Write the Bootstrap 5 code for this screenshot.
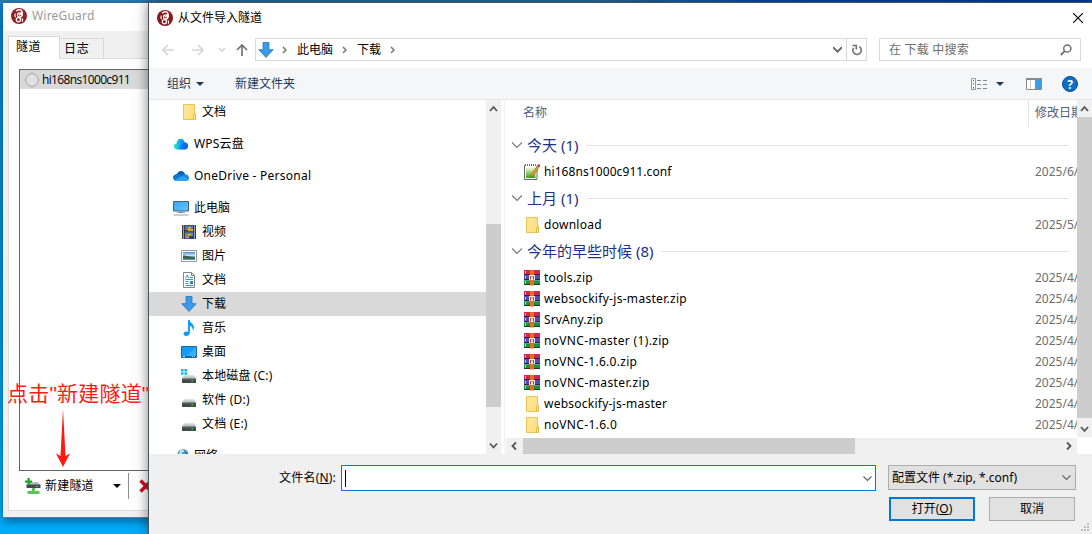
<!DOCTYPE html>
<html lang="zh-CN">
<head>
<meta charset="UTF-8">
<meta name="viewport" content="width=device-width, initial-scale=1.0">
<title>WireGuard</title>
<!-- Bootstrap CSS -->
<link href="https://cdn.jsdelivr.net/npm/bootstrap@5.3.3/dist/css/bootstrap.min.css" rel="stylesheet">
<style>
  body {
    height: 534px;
    font-family: "Noto Sans", "Noto Sans CJK SC", sans-serif;
    font-size: 12px;
    line-height: 16px;
    color: #000;
    background: linear-gradient(180deg, #0c84d2 0%, #078fdc 45%, #00adfb 97%);
  }
  svg { display: block; flex: none; }
  .topstrip { height: 3px; background: linear-gradient(90deg, #2b7cb0 0 55%, #0a50b4 70%, #0341a8); }

  /* main window */
  .win-main { left: 3px; top: 3px; width: 660px; height: 515px; background: #f0f0f0; border: solid #5b7f99; border-width: 0 0 1px 0; box-shadow: 0 3px 9px rgba(0,20,50,.5); }
  .win-main .caption { height: 28px; padding: 0 0 2px 8px; gap: 5px; background: #fff; color: #999; }
  .win-main .wg-name { font-size: 12px; letter-spacing: .2px; }
  .wg-tabs { height: 28px; padding: 5px 0 0 5px; }
  .wg-tab { border: 1px solid #d9d9d9; border-bottom: 0; line-height: 19px; }
  .wg-tab.on { width: 52px; height: 23px; padding-left: 7px; background: #fff; letter-spacing: .5px; }
  .wg-tab.off { width: 44px; height: 21px; padding-left: 4px; border-left: 0; letter-spacing: .8px; }
  .wg-pane { height: 453px; margin-left: 5px; padding: 10px 0 0 10px; background: #fff; border: 1px solid #dcdcdc; margin-top: -1px; }
  .wg-list { height: 402px; border: 1px solid #646464; }
  .wg-row { height: 19px; gap: 3px; padding-left: 5px; background: #d9d9d9; font-family: "Open Sans", sans-serif; letter-spacing: -.65px; }
  .wg-tools { height: 29px; padding-left: 6px; }
  .wg-new { width: 68px; letter-spacing: .2px; }
  .wg-drop { margin-right: 7px; }
  .wg-sep { width: 1px; height: 26px; margin-right: 10px; background: #8d8d8d; }

  /* file dialog */
  .dlg { left: 148px; top: 2px; width: 944px; height: 532px; background: #fff; border: solid #4a545c; border-width: 1px 0 0 1px; box-shadow: 0 0 12px rgba(0,0,0,.5); }
  .dlg-title { height: 29px; padding: 0 9px 0 8px; gap: 5px; }
  .dlg-nav { height: 36px; padding: 6px 11px 7px 12px; }
  .addr { width: 612px; height: 23px; border: 1px solid #d9d9d9; padding-left: 2px; }
  .crumb { padding: 0 9px 0 10px; }
  .refresh { width: 20px; height: 21px; border-left: 1px solid #d9d9d9; }
  .search { width: 202px; height: 23px; border: 1px solid #d9d9d9; padding: 0 8px 0 9px; color: #6d6d6d; }
  .search span { letter-spacing: .2px; }
  .cmdbar { height: 32px; background: #f5f6f7; border-bottom: 1px solid #e5e7ea; color: #1e395b; padding: 0 14px 0 18px; }
  .cmd-org { width: 68px; gap: 5px; }
  .cmd-view { margin: 0 22px 0 9px; }
  .browse { height: 354px; }
  .tree { width: 337px; overflow: hidden; }
  .tree-row { height: 24px; }
  .tree-row.sel { background: #d9d9d9; }
  .tree-row span { padding-left: 5px; white-space: nowrap; }
  .sb { background: #f0f0f0; }
  .sb-v { width: 15px; }
  .thumb { background: #cdcdcd; }
  .split { width: 4px; border-right: 1px solid #f0f0f0; }
  .file-pane { padding-left: 1px; }
  .files { width: 571px; height: 338px; overflow: hidden; }
  .files-head { height: 27px; margin-bottom: 2px; padding: 5px 0 0 17px; color: #4c607a; }
  .files-head .c-date { height: 27px; margin-top: -5px; border-left: 1px solid #e5e5e5; padding: 5px 0 0 6px; width: 49px; }
  .grp { height: 32px; padding: 0 8px 1px 6px; color: #1e3287; font-size: 15px; line-height: 20px; gap: 5px; }
  .grp hr { height: 1px; border: 0; background: #e2e2e2; opacity: 1; margin: 2px 0 0 3px; }
  .f-row { height: 21px; padding-left: 18px; }
  .f-row .c-date { width: 42px; color: #6d6d6d; overflow: hidden; white-space: nowrap; }
  .sb-h { height: 16px; width: 571px; background: #f0f0f0; }
  .dlg-foot { height: 80px; background: #f0f0f0; padding: 11px 16px 0 0; }
  .name-label { padding: 5px 5px 0 0; letter-spacing: .2px; }
  .name-box { width: 535px; height: 26px; border: 1px solid #0078d7; background: #fff; padding: 0 3px; }
  .caret { width: 1px; height: 17px; background: #000; }
  .type-box { width: 188px; height: 25px; border: 1px solid #adadad; background: #e1e1e1; padding: 0 4px 0 3px; margin-left: 12px; }
  .foot-btns { gap: 14px; padding: 6px 1px 0 0; }
  .w-btn { width: 86px; height: 24px; border: 1px solid #adadad; border-radius: 0; background: #e1e1e1; color: #000; font-size: 12px; line-height: 20px; padding: 0; }
  .w-btn.def { border: 2px solid #0078d7; line-height: 18px; }
  .grip { right: 2px; bottom: 2px; }

  /* red annotation */
  .note { left: 7px; top: 381px; color: #ff1a10; font-family: "Liberation Sans", "Noto Sans CJK SC", sans-serif; font-size: 21px; line-height: 26px; letter-spacing: .2px; white-space: nowrap; z-index: 5; }
  .note-arrow { left: 56px; top: 409px; z-index: 5; }
</style>
</head>
<body class="position-relative overflow-hidden">

  <!-- Icons -->
  <svg width="0" height="0" class="position-absolute">
    <defs>
      <linearGradient id="gBlue" x1="0" y1="0" x2="1" y2="1"><stop offset="0" stop-color="#35a5f0"/><stop offset="1" stop-color="#66c4fb"/></linearGradient>
      <linearGradient id="gFold" x1="0" y1="0" x2="1" y2="1"><stop offset="0" stop-color="#ffe9a0"/><stop offset="1" stop-color="#ffdc7a"/></linearGradient>
      <linearGradient id="gWps" x1="0" y1="0" x2="1" y2="0"><stop offset="0" stop-color="#37e5c5"/><stop offset=".45" stop-color="#15a9f3"/><stop offset="1" stop-color="#1059ea"/></linearGradient>
      <linearGradient id="gDrive" x1="0" y1="0" x2="0" y2="1"><stop offset="0" stop-color="#e2e4e5"/><stop offset="1" stop-color="#a9adb0"/></linearGradient>
      <linearGradient id="gGreen" x1="0" y1="0" x2="0" y2="1"><stop offset="0" stop-color="#e9f6cf"/><stop offset="1" stop-color="#35a414"/></linearGradient>
      <linearGradient id="gSky" x1="0" y1="0" x2="0" y2="1"><stop offset="0" stop-color="#4d8fe0"/><stop offset=".5" stop-color="#d9edf7"/><stop offset=".6" stop-color="#4c7d75"/><stop offset="1" stop-color="#5c93ba"/></linearGradient>
    </defs>
    <symbol id="wg" viewBox="0 0 16 16">
      <circle cx="8" cy="8" r="8" fill="#88171a"/>
      <path d="M5.2 3.2C6.8 1.2 10.6 1.4 11 3.7c.3 2-1.9 2.500-3 3.400M11 4.200c1 2.600-.6 3.900-2.200 5" fill="none" stroke="#fff" stroke-width="1.500"/>
      <circle cx="8.700" cy="7" r="2.200" fill="none" stroke="#fff" stroke-width="1.200"/>
      <circle cx="7.400" cy="11.700" r="2.100" fill="none" stroke="#fff" stroke-width="1.300"/>
      <path d="M4.300 5.500c-.7 1.700-.3 3 .4 3.600M11 10.200c.8 1.100.8 2.400.2 3.400" fill="none" stroke="#fff" stroke-width="1.100"/>
    </symbol>
    <symbol id="folder" viewBox="0 0 16 16">
      <path d="M2.500.5h11v15h-11z" fill="url(#gFold)" stroke="#ebc44f"/>
      <path d="M12.500 15.500v-5l2-.9v5.900z" fill="#ffe693" stroke="#e3b838" stroke-width=".9"/>
    </symbol>
    <symbol id="wps" viewBox="0 0 16 16">
      <path d="M4.800 13.500C-.3 13.500-.3 7.800 3.500 7.200 4 1.700 10.400 1.300 11.500 6.300c4.900.3 4.500 7.200 0 7.200z" fill="url(#gWps)"/>
      <path d="M6 13.500c1.200-3.800 3-6.500 5.500-7.200 4.900.3 4.500 7.200 0 7.200z" fill="#125ff0" opacity=".55"/>
    </symbol>
    <symbol id="onedrive" viewBox="0 0 16 16">
      <path d="M3.600 7.200C4.600 2 10.700 1.600 12 6.300l-3 4z" fill="#0a61ae"/>
      <path d="M3.500 6C5.700 5.200 7.600 7 9.500 8.200L4 13C-.8 13.300-1.500 7.200 3.500 6z" fill="#0a78cc"/>
      <path d="M11.700 6.200c3.300-.3 5.300 3 3.800 5.500l-7-4c.9-.8 1.900-1.500 3.200-1.500z" fill="#138bdb"/>
      <path d="M1.200 12.100l8-4.100 6.500 3.600c-.6 1-1.500 1.500-2.700 1.500H3.600c-1 0-1.800-.4-2.400-1z" fill="#2ba3ec"/>
    </symbol>
    <symbol id="pc" viewBox="0 0 16 16">
      <path d="M.5 1.500h15v9.500H.5z" fill="url(#gBlue)" stroke="#39657e"/>
      <path d="M7 11.500h2v1H7zM4 12.200h8v.9H4z" fill="#6c8796"/><path d="M.5 14.500h15v1H.5z" fill="#8aa1ad"/>
    </symbol>
    <symbol id="video" viewBox="0 0 16 16">
      <path d="M1 1h14v14H1z" fill="#3c3c3c"/>
      <path d="M4 1.500h8v6H4z" fill="#4a75cf"/><path d="M4 8.500h8v6H4z" fill="#5688e2"/>
      <path d="M7 3h3v2h2v2H6V5h1zM7 10h3v2h2v2H5v-1h2z" fill="#dca22a"/><path d="M4 6h3v1.500H4zM8 12h4v2.500H8z" fill="#27405e"/>
      <path d="M2.500 1.500v14M13.500 1.500v14" stroke="#fff" stroke-width="1" stroke-dasharray="1 1"/>
    </symbol>
    <symbol id="photo" viewBox="0 0 16 16">
      <path d="M.5 2.500h15v11H.5z" fill="#fff" stroke="#999"/><path d="M2 4h12v8H2z" fill="url(#gSky)"/><path d="M2 7.500c4 .2 6 1 12 2v1.200H2z" fill="#356457"/>
    </symbol>
    <symbol id="doc" viewBox="0 0 16 16">
      <path d="M2.500.5h8l3 3v12h-11z" fill="#fff" stroke="#858585"/><path d="M10.500.5v3h3" fill="none" stroke="#858585"/>
      <path d="M4.500 6l1.800-3 1.200 3M9 5.500h3M4.500 7.500H12M4.500 9.500h3M9 9.500h3M4.500 11.500h3M4.500 13.500H12" fill="none" stroke="#3c97bd"/><path d="M9 10h3v2H9z" fill="#407aa3"/>
    </symbol>
    <symbol id="down" viewBox="0 0 16 16">
      <path d="M5 .5h6v7.200h4.200L8 15.500.8 7.700H5z" fill="#3a9ae8" stroke="#2677bd" stroke-width=".8"/>
    </symbol>
    <symbol id="music" viewBox="0 0 16 16">
      <path d="M7 0h1.700c.4 3 4.300 3.800 4.300 7.500 0 1.400-.6 2.500-1.300 3.200.3-2.700-.7-4-2.800-4.600v6.400C8.900 14.600 7.300 16 5.200 16 1.500 16 1.800 11.600 5 11.600c.8 0 1.400.1 2 .4z" fill="#109cf5"/>
    </symbol>
    <symbol id="desk" viewBox="0 0 16 16">
      <path d="M.5 2.500h15v11H.5z" fill="#169bf5" stroke="#1268a8"/><path d="M15 3v9L6 12z" fill="#38aff9"/><path d="M1 12.200h14v1H1z" fill="#135f98"/><path d="M2 12.700h2M11 12.700h1m1 0h1" stroke="#fff" stroke-width=".8"/>
    </symbol>
    <symbol id="drive" viewBox="0 0 16 16">
      <path d="M3 7h10l2 4H1z" fill="url(#gDrive)"/><path d="M1 10.700h14V15H1z" fill="#45484a"/><path d="M1 10.700h14v.7H1z" fill="#777"/><path d="M10.500 12.300H12v1.300h-1.500z" fill="#33e13c"/>
    </symbol>
    <symbol id="drivec" viewBox="0 0 16 16">
      <use href="#drive"/><path d="M0 1h2.600v2.500H0zM3.400 1H6v2.500H3.400zM0 4.300h2.600v2.500H0zM3.400 4.300H6v2.500H3.400z" fill="#10b7ef"/>
    </symbol>
    <symbol id="net" viewBox="0 0 16 16">
      <circle cx="10" cy="6.500" r="5.500" fill="#4e9bbd"/><path d="M7 2.500c2-1.800 4-1 4 .4S8.500 4 8.500 6H6z" fill="#c3e4ed"/><path d="M12 3l2.500 3-2 2z" fill="#2d6e9c"/>
    </symbol>
    <symbol id="conf" viewBox="0 0 16 16">
      <path d="M.5 1.500H13v14H.5z" fill="#fff" stroke="#666"/><path d="M2 4h9.500v10H2z" fill="url(#gGreen)"/>
      <path d="M1.500 1.500H13" stroke="#fff" stroke-width="1.500"/><path d="M1 1h12" stroke="#444" stroke-width="1.500" stroke-dasharray="1 1"/>
      <path d="M6.800 12.800l.5-2.300 6.300-9 1.700 1.200-6.300 9z" fill="#f5a623" stroke="#7b4a15" stroke-width=".6"/><path d="M13.600 1.500L14.500.2 16 .8v1l-.8 1z" fill="#a32030"/>
    </symbol>
    <symbol id="rar" viewBox="0 0 16 16">
      <path d="M0 0h16v5H0z" fill="#d0264f"/><path d="M0 5h16v5.500H0z" fill="#4f4db4"/><path d="M0 10.500h16V15H0z" fill="#16963b"/>
      <path d="M0 4.500h16M0 9.500h16M0 14.500h16" stroke="#281b2b" stroke-width=".8"/>
      <path d="M1.500 1v2.500M1.500 6v2.500M1.500 11v2.500" stroke="#eecb48"/>
      <path d="M6 0h4v15.500H6z" fill="#e86c1c"/><path d="M5 5h6v5H5z" fill="#ece6e2"/><path d="M6.500 9.500V6.500h3v3" fill="none" stroke="#b93625"/><path d="M7.500 5h1v3h-1z" fill="#ece6e2"/>
    </symbol>
    <symbol id="chev" viewBox="0 0 8 8"><path d="M0 2l4 4 4-4" fill="none" stroke="#666" stroke-width="1.700"/></symbol>
    <symbol id="crumb-sep" viewBox="0 0 5 8"><path d="M1 1l3 3-3 3" fill="none" stroke="#777" stroke-width="1.500"/></symbol>
    <symbol id="tri" viewBox="0 0 8 4"><path d="M0 0h8L4 4z" fill="currentColor"/></symbol>
  </svg>

  <div class="topstrip"></div>

  <!-- WireGuard main window -->
  <div class="win-main position-absolute">
    <div class="caption d-flex align-items-center">
      <svg width="16" height="16" opacity=".95"><use href="#wg"/></svg><span class="wg-name">WireGuard</span>
    </div>
    <div class="wg-tabs d-flex align-items-end">
      <div class="wg-tab on position-relative">隧道</div>
      <div class="wg-tab off">日志</div>
    </div>
    <div class="wg-pane">
      <div class="wg-list">
        <div class="wg-row d-flex align-items-center">
          <svg width="14" height="14"><circle cx="7" cy="7" r="6.400" fill="#e1e1e1" stroke="#a0a0a0"/></svg>
          <span>hi168ns1000c911</span>
        </div>
      </div>
      <div class="wg-tools d-flex align-items-center">
        <svg width="16" height="16" class="me-1">
          <path d="M4 4h9l2 3H2z" fill="#b8bcbe"/><path d="M1.500 6.500h14v3.500h-14z" fill="#484b4d"/><path d="M11 8h2v1h-2z" fill="#3de045"/>
          <path d="M7 10h3v3h4.500v3h-12v-3H7z" fill="#5cc455"/><path d="M2.500 0h2.200v2.500H7v2.200H4.700V7H2.500V4.700H0V2.500h2.500z" fill="#19a826"/>
        </svg>
        <span class="wg-new">新建隧道</span>
        <svg width="8" height="4" class="wg-drop"><use href="#tri"/></svg>
        <div class="wg-sep"></div>
        <svg width="14" height="14"><path d="M1.500 1.500l11 11M12.500 1.500l-11 11" stroke="#cf1220" stroke-width="3.400"/></svg>
      </div>
    </div>
  </div>

  <!-- File dialog -->
  <div class="dlg position-absolute">
    <div class="dlg-title d-flex align-items-center">
      <svg width="16" height="16"><use href="#wg"/></svg>
      <span>从文件导入隧道</span>
      <svg width="10" height="10" class="ms-auto"><path d="M0 0l10 10M10 0L0 10" stroke="#000" stroke-width="1.100"/></svg>
    </div>

    <div class="dlg-nav d-flex align-items-center">
      <svg width="94" height="16" fill="none" stroke="#d6d6d6" stroke-width="1.700">
        <path d="M13 8H2M7 3L2 8l5 5"/><path d="M31 8h11M37 3l5 5-5 5"/><path d="M58 6l3 3 3-3"/><path d="M81 14V3M76 8l5-5 5 5" stroke="#747474"/>
      </svg>
      <div class="addr d-flex align-items-center">
        <svg width="16" height="16" class="me-2"><use href="#down"/></svg>
        <svg width="5" height="8"><use href="#crumb-sep"/></svg>
        <span class="crumb">此电脑</span>
        <svg width="5" height="8"><use href="#crumb-sep"/></svg>
        <span class="crumb">下载</span>
        <svg width="5" height="8"><use href="#crumb-sep"/></svg>
        <svg width="9" height="9" class="ms-auto me-1"><use href="#chev"/></svg>
        <div class="refresh d-flex align-items-center justify-content-center">
          <svg width="12" height="12"><path d="M8.200 2.600A4.200 4.200 0 1 1 2.600 3.900M1.500 1.500H5.300V5.500" fill="none" stroke="#707070" stroke-width="1.600"/></svg>
        </div>
      </div>
      <div class="search d-flex align-items-center justify-content-between ms-auto">
        <span>在 下载 中搜索</span>
        <svg width="12" height="12"><circle cx="7.300" cy="4.500" r="3.600" fill="none" stroke="#707070" stroke-width="1.500"/><path d="M4.700 7.200L.8 11" stroke="#707070" stroke-width="1.800"/></svg>
      </div>
    </div>

    <div class="cmdbar d-flex align-items-center">
      <div class="cmd-org d-flex align-items-center">
        <span>组织</span>
        <svg width="8" height="4"><use href="#tri"/></svg>
      </div>
      <span>新建文件夹</span>
      <svg width="16" height="12" class="ms-auto">
        <path d="M.5.5h4v11h-4z" fill="#fff" stroke="#999"/><path d="M2 2h1v1.500H2z" fill="#777"/><path d="M2 5h1v1.500H2z" fill="#2d8ad8"/><path d="M2 9h1v1.500H2z" fill="#d33"/>
        <path d="M6 2.500h4M12 2.500h4M6 6.500h4M12 6.500h4M6 10.500h4M12 10.500h4" stroke="#888"/>
      </svg>
      <svg width="8" height="4" class="cmd-view"><use href="#tri"/></svg>
      <svg width="16" height="12" class="me-3"><path d="M.5.5h15v11H.5z" fill="#fff" stroke="#8a8a8a"/><path d="M0 0h16v2H0z" fill="#8a8a8a"/><path d="M4.500 2v9" stroke="#ccc"/><path d="M9 2h6v9H9z" fill="#3a9ce8"/></svg>
      <svg width="16" height="16" class="ms-1"><circle cx="8" cy="8" r="7.500" fill="#0b6fca" stroke="#0a4d93"/><text x="8" y="12.500" fill="#fff" font-size="12" font-weight="700" text-anchor="middle">?</text></svg>
    </div>

    <div class="browse d-flex">
      <div class="tree" id="tree"></div>
      <div class="sb sb-v d-flex flex-column align-items-center">
        <svg width="15" height="17"><path d="M4 11l3.500-4 3.500 4" fill="none" stroke="#555" stroke-width="1.800"/></svg>
        <div class="thumb w-100" style="margin-top:107px;height:183px"></div>
        <svg width="15" height="17" class="mt-auto"><path d="M4 6.500l3.500 4 3.500-4" fill="none" stroke="#555" stroke-width="1.800"/></svg>
      </div>
      <div class="split"></div>
      <div class="file-pane d-flex flex-column">
        <div class="files">
          <div class="files-head d-flex justify-content-between">
            <span>名称</span>
            <div class="c-date text-nowrap">修改日期</div>
          </div>
          <div id="files"></div>
        </div>
        <div class="sb-h d-flex align-items-center">
          <svg width="17" height="16"><path d="M10 4.500L6.500 8l3.500 3.500" fill="none" stroke="#555" stroke-width="1.800"/></svg>
          <div class="thumb h-100" style="width:332px"></div>
          <svg width="17" height="16" class="ms-auto"><path d="M7 4.500L10.500 8 7 11.500" fill="none" stroke="#555" stroke-width="1.800"/></svg>
        </div>
      </div>
      <div class="sb sb-v d-flex flex-column" style="height:337px">
        <svg width="15" height="17"><path d="M4 11l3.500-4 3.500 4" fill="none" stroke="#555" stroke-width="1.800"/></svg>
        <div class="thumb flex-grow-1"></div>
        <svg width="15" height="19"><path d="M4 9l3.500 4L11 9" fill="none" stroke="#555" stroke-width="1.800"/></svg>
      </div>
    </div>

    <div class="dlg-foot position-relative d-flex flex-column align-items-end">
      <div class="d-flex align-items-start">
        <span class="name-label">文件名(<u>N</u>):</span>
        <div class="name-box d-flex align-items-center justify-content-between">
          <div class="caret"></div>
          <svg width="9" height="9"><path d="M.5 2.500l4 4 4-4" fill="none" stroke="#666" stroke-width="1.200"/></svg>
        </div>
        <div class="type-box d-flex align-items-center justify-content-between">
          <span>配置文件 (*.zip, *.conf)</span>
          <svg width="9" height="9"><path d="M.5 2.500l4 4 4-4" fill="none" stroke="#666" stroke-width="1.200"/></svg>
        </div>
      </div>
      <div class="d-flex foot-btns">
        <button class="btn w-btn def">打开(<u>O</u>)</button>
        <button class="btn w-btn">取消</button>
      </div>
      <svg width="9" height="9" class="grip position-absolute"><path d="M6 0h2v2H6zM3 3h2v2H3zM6 3h2v2H6zM0 6h2v2H0zM3 6h2v2H3zM6 6h2v2H6z" fill="#bfbfbf"/></svg>
    </div>
  </div>

  <!-- Red note over the windows -->
  <div class="note position-absolute">点击"新建隧道"</div>
  <svg width="14" height="58" class="note-arrow position-absolute"><path d="M7 0l2.500 47 4.500-2.500L7 58 0 44.500 4.500 47z" fill="#ff1a10"/></svg>

  <script src="https://cdn.jsdelivr.net/npm/bootstrap@5.3.3/dist/js/bootstrap.bundle.min.js"></script>
  <script>
    // [icon, label, level, gap before, letter spacing]
    const tree = [
      ['folder', '文档', 1, 0, 0],
      ['wps', 'WPS云盘', 0, 8, .2],
      ['onedrive', 'OneDrive - Personal', 0, 8, .25],
      ['pc', '此电脑', 0, 8, 0],
      ['video', '视频', 1, 0, 0],
      ['photo', '图片', 1, 0, 0],
      ['doc', '文档', 1, 0, 0],
      ['down', '下载', 1, 0, 0],
      ['music', '音乐', 1, 0, 0],
      ['desk', '桌面', 1, 0, 0],
      ['drivec', '本地磁盘 (C:)', 1, 0, .15],
      ['drive', '软件 (D:)', 1, 0, .2],
      ['drive', '文档 (E:)', 1, 0, .2],
      ['net', '网络', 0, 8, 0]
    ];

    const groups = [
      ['今天 (1)', '2025/6/', [['conf', 'hi168ns1000c911.conf', .08]]],
      ['上月 (1)', '2025/5/', [['folder', 'download', .28]]],
      ['今年的早些时候 (8)', '2025/4/', [
        ['rar', 'tools.zip', .2],
        ['rar', 'websockify-js-master.zip', .3],
        ['rar', 'SrvAny.zip', .15],
        ['rar', 'noVNC-master (1).zip', .33],
        ['rar', 'noVNC-1.6.0.zip', .3],
        ['rar', 'noVNC-master.zip', .38],
        ['folder', 'websockify-js-master', .24],
        ['folder', 'noVNC-1.6.0', .33]
      ]]
    ];

    let treeHtml = '';
    for (const [icon, label, level, gap, ls] of tree) {
      treeHtml += `
        <div class="tree-row d-flex align-items-center ${icon === 'down' ? 'sel' : ''}" style="margin-top:${gap}px;padding-left:${24 + level * 8}px;letter-spacing:${ls}px">
          <svg width="16" height="16"><use href="#${icon}"/></svg>
          <span>${label}</span>
        </div>`;
    }
    document.getElementById('tree').innerHTML = treeHtml;

    let filesHtml = '';
    for (const [title, date, items] of groups) {
      filesHtml += `
        <div class="grp d-flex align-items-center">
          <svg width="10" height="10"><path d="M0 2.500l5 5 5-5" fill="none" stroke="#777" stroke-width="1.200"/></svg>
          <span>${title}</span><hr class="flex-grow-1">
        </div>`;
      for (const [icon, name, ls] of items) {
        filesHtml += `
          <div class="f-row d-flex align-items-center">
            <svg width="16" height="16" class="me-1"><use href="#${icon}"/></svg>
            <span style="letter-spacing:${ls}px">${name}</span>
            <span class="c-date ms-auto">${date}</span>
          </div>`;
      }
    }
    document.getElementById('files').innerHTML = filesHtml;
  </script>
</body>
</html>
